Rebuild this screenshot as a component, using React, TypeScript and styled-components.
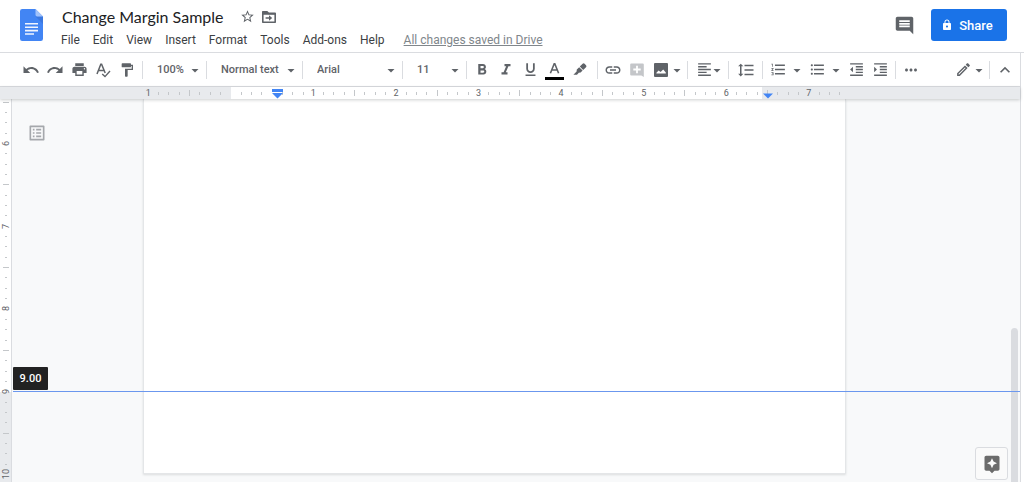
import React from "react";
import styled, { createGlobalStyle } from "styled-components";
import {
  MdAssistant,
  MdExpandLess,
  MdFormatAlignLeft,
  MdFormatBold,
  MdFormatIndentDecrease,
  MdFormatIndentIncrease,
  MdFormatItalic,
  MdFormatLineSpacing,
  MdFormatListBulleted,
  MdFormatListNumbered,
  MdFormatPaint,
  MdFormatUnderlined,
  MdInsertComment,
  MdInsertLink,
  MdLock,
  MdMoreHoriz,
  MdOutlineEdit,
  MdOutlineListAlt,
  MdPrint,
  MdRedo,
  MdStarBorder,
  MdUndo,
} from "react-icons/md";

const color = {
  line: "#dadce0",
  icon: "#5f6368",
  text: "#3c4043",
  canvas: "#f8f9fa",
  margin: "#e8eaed",
  tick: "#c4c7ca",
  blue: "#1a73e8",
  guide: "#6b97ee",
  marker: "#4285f4",
};

const GlobalStyle = createGlobalStyle`
  * { box-sizing: border-box; }
  body {
    margin: 0;
    background: #fff;
    color: ${color.text};
    font-family: Roboto, "Liberation Sans", sans-serif;
    overflow: hidden;
  }
  button, input, select { font: inherit; color: inherit; }
  svg { display: block; flex: none; }
`;

const Shell = styled.div`
  display: flex;
  flex-direction: column;
  height: 100vh;
`;

/* Header */

const Header = styled.header`
  display: flex;
  align-items: flex-start;
  padding: 9px 17px 0 20px;
  height: 53px;
  flex: none;
  border-bottom: 1px solid ${color.line};
`;

const Titles = styled.div`
  flex: 1;
  min-width: 0;
  margin-left: 17px;
`;

const TitleRow = styled.div`
  display: flex;
  align-items: center;
  height: 15px;
`;

const TitleInput = styled.input`
  width: 175px;
  height: 22px;
  padding: 0 0 0 1px;
  border: 0;
  outline: 0;
  background: transparent;
  color: #202124;
  font-family: Lato, "Liberation Sans", sans-serif;
  font-size: 16px;
`;

const PlainButton = styled.button`
  display: flex;
  align-items: center;
  justify-content: center;
  padding: 0;
  border: 0;
  background: transparent;
  color: ${color.icon};
  cursor: pointer;
`;

const TitleAction = styled(PlainButton)`
  width: 22px;
  height: 20px;
`;

const MenuBar = styled.nav`
  display: flex;
  align-items: center;
  gap: 13px;
  height: 16px;
  margin-top: 8px;
  white-space: nowrap;
`;

const MenuItem = styled.button`
  padding: 0;
  border: 0;
  background: transparent;
  font-size: 12px;
  line-height: 16px;
  cursor: pointer;
`;

const SaveStatus = styled.a`
  margin-left: 6px;
  color: #80868b;
  font-size: 12px;
  line-height: 16px;
  text-decoration: underline;
`;

const CommentsButton = styled(PlainButton)`
  width: 32px;
  height: 32px;
  margin-right: 11px;
`;

const ShareButton = styled.button`
  display: flex;
  align-items: center;
  justify-content: center;
  gap: 6px;
  width: 76px;
  height: 32px;
  padding: 0 4px 0 0;
  border: 0;
  border-radius: 3px;
  background: ${color.blue};
  color: #fff;
  font-size: 13px;
  font-weight: 500;
  cursor: pointer;
`;

/* Toolbar */

const Editor = styled.div`
  display: flex;
  flex-direction: column;
  flex: 1;
  min-height: 0;
  margin-right: 3px;
  border-right: 1px solid ${color.line};
`;

const Toolbar = styled.div`
  display: flex;
  align-items: center;
  flex: none;
  height: 34px;
  padding: 0 3px 0 19px;
  border-bottom: 1px solid ${color.line};
`;

const Tool = styled(PlainButton)<{ $width?: number; $gap?: number }>`
  flex: none;
  width: ${(p) => p.$width ?? 24}px;
  height: 24px;
  gap: ${(p) => p.$gap ?? 0}px;
`;

const Divider = styled.span`
  flex: none;
  width: 1px;
  height: 18px;
  margin: 0 3px;
  background: ${color.line};
`;

const Spacer = styled.span`
  flex: 1;
`;

const Picker = styled.label<{ $width: number }>`
  display: grid;
  grid-template-columns: 1fr 12px;
  align-items: center;
  flex: none;
  width: ${(p) => p.$width}px;
  color: ${color.icon};
`;

const PickerSelect = styled.select`
  grid-area: 1 / 1 / 2 / 3;
  width: 100%;
  height: 24px;
  padding: 0 0 0 11px;
  border: 0;
  outline: 0;
  background: transparent;
  appearance: none;
  font-size: 11px;
  font-weight: 500;
`;

const PickerArrow = styled.span`
  grid-area: 1 / 2;
  padding-top: 1px;
  pointer-events: none;
`;

/* Rulers */

const RulerBar = styled.div`
  position: relative;
  z-index: 1;
  flex: none;
  height: 12px;
  padding-left: 143px;
  background: ${color.margin};
  box-shadow: 0 1px 3px rgba(60, 64, 67, 0.25);
`;

const HorizontalRuler = styled.div`
  display: grid;
  grid-template-columns: repeat(68, minmax(0, 1fr));
  width: 702px;
  height: 12px;
`;

const VerticalRuler = styled.div`
  display: grid;
  grid-template-rows: repeat(38, minmax(0, 1fr));
  flex: none;
  width: 12px;
  height: 393px;
  margin-top: -2px;
  border-right: 1px solid ${color.line};
`;

type Fill = "page" | "margin" | "pageStart" | "pageEnd";

const fills: Record<Fill, string> = {
  page: "#fff",
  margin: color.margin,
  pageStart: `linear-gradient(to right, ${color.margin} 50%, #fff 50%)`,
  pageEnd: `linear-gradient(to bottom, #fff 50%, ${color.margin} 50%)`,
};

const Slot = styled.span<{ $fill: Fill }>`
  position: relative;
  display: flex;
  align-items: center;
  justify-content: center;
  background: ${(p) => fills[p.$fill]};
`;

const Tick = styled.i<{ $long: boolean; $vertical?: boolean }>`
  width: ${(p) => (p.$vertical ? (p.$long ? 6 : 2) : 1)}px;
  height: ${(p) => (p.$vertical ? 1 : p.$long ? 6 : 3)}px;
  background: ${color.tick};
`;

const RulerNumber = styled.span<{ $vertical?: boolean }>`
  color: ${color.icon};
  font-size: 9px;
  line-height: 10px;
  writing-mode: ${(p) => (p.$vertical ? "vertical-rl" : "horizontal-tb")};
  transform: ${(p) => (p.$vertical ? "rotate(180deg)" : "none")};
`;

const IndentMarker = styled.span<{ $side: "left" | "right" }>`
  position: absolute;
  z-index: 1;
  top: ${(p) => (p.$side === "left" ? 2 : 6)}px;
  left: ${(p) => (p.$side === "left" ? "100%" : "50%")};
  margin-left: -5px;
`;

/* Workspace */

const Workspace = styled.main`
  position: relative;
  display: flex;
  align-items: flex-start;
  flex: 1;
  min-height: 0;
  overflow: hidden;
  background: ${color.canvas};
`;

const OutlineRail = styled.div`
  flex: none;
  width: 131px;
  padding: 24px 0 0 15px;
`;

const OutlineButton = styled(PlainButton)`
  width: 20px;
  height: 20px;
  color: #a5a8ac;
`;

const Page = styled.article`
  flex: none;
  width: 703px;
  height: 375px;
  background: #fff;
  border: 1px solid #e4e6e8;
  border-top: 0;
  box-shadow: 0 1px 2px rgba(60, 64, 67, 0.15);
`;

const MarginGuide = styled.div`
  position: absolute;
  z-index: 2;
  top: 268px;
  left: 13px;
  right: 0;
`;

const MarginValue = styled.output`
  display: block;
  width: 35px;
  height: 23px;
  margin-bottom: 1px;
  border-radius: 1px;
  background: #222;
  color: #fff;
  font-size: 11px;
  font-weight: 500;
  line-height: 23px;
  text-align: center;
`;

const GuideLine = styled.div`
  height: 1px;
  background: ${color.guide};
`;

const ScrollThumb = styled.div`
  position: absolute;
  top: 229px;
  bottom: -6px;
  right: 2px;
  width: 7px;
  border-radius: 4px;
  background: #dadce0;
`;

const ExploreButton = styled(PlainButton)`
  position: absolute;
  right: 12px;
  bottom: 2px;
  width: 33px;
  height: 33px;
  border: 1px solid ${color.line};
  border-radius: 3px;
  background: #fafafa;
  color: #6b6b6b;
`;

const DocsLogo = () => (
  <svg width="24" height="32" viewBox="0 0 24 32" aria-hidden="true">
    <path d="M2.2 0H15.5L23 7.5V29.8A2.2 2.2 0 0 1 20.8 32H2.2A2.2 2.2 0 0 1 0 29.8V2.2A2.2 2.2 0 0 1 2.2 0Z" fill="#4285f4" />
    <path d="M15.5 7.5L23 15V7.5Z" fill="#3b78e0" />
    <path d="M15.5 0L23 7.5H17.2A1.7 1.7 0 0 1 15.5 5.8Z" fill="#a1c2fa" />
    <path d="M5 14H18V15.6H5ZM5 17.4H18V19H5ZM5 20.8H18V22.4H5ZM5 24.2H14V25.8H5Z" fill="#f1f5fe" />
  </svg>
);

const Caret = () => (
  <svg width="8" height="8" viewBox="0 0 8 8" aria-hidden="true">
    <path d="M0.5 3H7.5L4 6.5Z" fill="currentColor" />
  </svg>
);

const MoveIcon = () => (
  <svg width="16" height="16" viewBox="0 0 16 16" aria-hidden="true">
    <path
      d="M1.8 2.8H6L7.6 4.4H14.2V13.2H1.8Z"
      fill="none"
      stroke="currentColor"
      strokeWidth="1.6"
      strokeLinejoin="round"
    />
    <path d="M1.8 2.6H6L7.6 4.2H14.4V5.8H1.8Z" fill="currentColor" />
    <path d="M4.6 8.2H8V6.2L11.2 9L8 11.8V9.8H4.6Z" fill="currentColor" />
  </svg>
);

const SpellcheckIcon = () => (
  <svg width="18" height="18" viewBox="0 0 18 18" fill="none" stroke="currentColor" aria-hidden="true">
    <path d="M3 13L6.8 3.2H7.6L11.2 12M4.4 9.6H9.8" strokeWidth="1.5" />
    <path d="M8.2 13L11 15.6L16 10" strokeWidth="1.4" />
  </svg>
);

const HighlighterIcon = () => (
  <svg width="16" height="16" viewBox="0 0 16 16" fill="currentColor" aria-hidden="true">
    <path d="M10.6 1.8A1.4 1.4 0 0 1 12.6 1.8L14 3.2A1.4 1.4 0 0 1 14 5.2L11.2 8L7.8 4.6Z" />
    <path d="M7.2 5.2L10.6 8.6L8.6 10.6L6.8 10.8L5 12.8H1.4L4.6 9.4L4.8 7.6Z" />
  </svg>
);

const AddCommentIcon = () => (
  <svg width="16" height="16" viewBox="0 0 16 16" aria-hidden="true">
    <path d="M2.2 1.4H13.8A1 1 0 0 1 14.8 2.4V15L12.4 13.4H2.2A1 1 0 0 1 1.2 12.4V2.4A1 1 0 0 1 2.2 1.4Z" fill="#c4c6c9" />
    <path d="M7.1 3.8H8.9V6.6H11.7V8.4H8.9V11.2H7.1V8.4H4.3V6.6H7.1Z" fill="#fff" />
  </svg>
);

const ImageIcon = () => (
  <svg width="16" height="16" viewBox="0 0 16 16" aria-hidden="true">
    <path d="M2 1H14A1 1 0 0 1 15 2V14A1 1 0 0 1 14 15H2A1 1 0 0 1 1 14V2A1 1 0 0 1 2 1Z" fill="currentColor" />
    <path d="M3.4 11.6V10.8L5.6 8.4L7.6 10L10.2 7.4L12.8 10.6V11.6Z" fill="#fff" />
  </svg>
);

const TextColorIcon = () => (
  <svg width="20" height="20" viewBox="0 0 20 20" fill="none" aria-hidden="true">
    <path d="M6.4 13.2L10.2 3.8H10.8L14.6 13.2M7.6 10H13.4" stroke="currentColor" strokeWidth="1.6" />
    <path d="M1 17H20V20H1Z" fill="#000" />
  </svg>
);

const IndentShape = ({ side }: { side: "left" | "right" }) =>
  side === "left" ? (
    <svg width="11" height="10" viewBox="0 0 11 10" aria-hidden="true">
      <path d="M0 0H11V3H0ZM0 4H11L5.5 9.5Z" fill={color.marker} />
    </svg>
  ) : (
    <svg width="10" height="6" viewBox="0 0 10 6" aria-hidden="true">
      <path d="M0 0.5H10L5 5.5Z" fill={color.marker} />
    </svg>
  );

const menus = ["File", "Edit", "View", "Insert", "Format", "Tools", "Add-ons", "Help"];

const pickers = [
  { label: "Zoom", value: "100%", width: 57 },
  { label: "Styles", value: "Normal text", width: 89 },
  { label: "Font", value: "Arial", width: 93 },
  { label: "Font size", value: "11", width: 57 },
];

const horizontalSlots = Array.from({ length: 68 }, (_, i) => {
  const inch = i / 8 - 1;
  const fill: Fill = i === 8 ? "pageStart" : i > 8 && i < 60 ? "page" : "margin";
  return { i, inch, fill };
});

const verticalSlots = Array.from({ length: 38 }, (_, i) => {
  const inch = 5.5 + i / 8;
  const fill: Fill = inch === 9 ? "pageEnd" : inch < 9 ? "page" : "margin";
  return { i, inch, fill };
});

export default function App() {
  return (
    <Shell>
      <GlobalStyle />
      <Header>
        <DocsLogo />
        <Titles>
          <TitleRow>
            <TitleInput aria-label="Document title" defaultValue="Change Margin Sample" />
            <TitleAction aria-label="Star"><MdStarBorder size={15} /></TitleAction>
            <TitleAction aria-label="Move"><MoveIcon /></TitleAction>
          </TitleRow>
          <MenuBar>
            {menus.map((name) => (
              <MenuItem key={name}>{name}</MenuItem>
            ))}
            <SaveStatus href="#history">All changes saved in Drive</SaveStatus>
          </MenuBar>
        </Titles>
        <CommentsButton aria-label="Comments"><MdInsertComment size={21} /></CommentsButton>
        <ShareButton><MdLock size={12} />Share</ShareButton>
      </Header>

      <Editor>
        <Toolbar role="toolbar">
          <Tool aria-label="Undo"><MdUndo size={18} /></Tool>
          <Tool aria-label="Redo"><MdRedo size={18} /></Tool>
          <Tool aria-label="Print"><MdPrint size={17} /></Tool>
          <Tool aria-label="Spelling"><SpellcheckIcon /></Tool>
          <Tool aria-label="Paint format"><MdFormatPaint size={16} /></Tool>
          <Divider />
          {pickers.map((p) => (
            <React.Fragment key={p.label}>
              <Picker $width={p.width}>
                <PickerSelect aria-label={p.label} defaultValue={p.value}>
                  <option>{p.value}</option>
                </PickerSelect>
                <PickerArrow><Caret /></PickerArrow>
              </Picker>
              <Divider />
            </React.Fragment>
          ))}
          <Tool aria-label="Bold"><MdFormatBold size={18} /></Tool>
          <Tool aria-label="Italic"><MdFormatItalic size={18} /></Tool>
          <Tool aria-label="Underline"><MdFormatUnderlined size={17} /></Tool>
          <Tool aria-label="Text color"><TextColorIcon /></Tool>
          <Tool aria-label="Highlight color" $width={28}><HighlighterIcon /></Tool>
          <Divider />
          <Tool aria-label="Insert link"><MdInsertLink size={18} /></Tool>
          <Tool aria-label="Add comment"><AddCommentIcon /></Tool>
          <Tool aria-label="Insert image" $width={35} $gap={4}><ImageIcon /><Caret /></Tool>
          <Divider />
          <Tool aria-label="Align" $width={34}><MdFormatAlignLeft size={17} /><Caret /></Tool>
          <Divider />
          <Tool aria-label="Line spacing" $width={27}><MdFormatLineSpacing size={18} /></Tool>
          <Divider />
          <Tool aria-label="Numbered list" $width={39} $gap={6}><MdFormatListNumbered size={17} /><Caret /></Tool>
          <Tool aria-label="Bulleted list" $width={39} $gap={6}><MdFormatListBulleted size={17} /><Caret /></Tool>
          <Tool aria-label="Decrease indent"><MdFormatIndentDecrease size={17} /></Tool>
          <Tool aria-label="Increase indent"><MdFormatIndentIncrease size={17} /></Tool>
          <Divider />
          <Tool aria-label="More"><MdMoreHoriz size={18} /></Tool>
          <Spacer />
          <Tool aria-label="Editing mode" $width={34} $gap={3}><MdOutlineEdit size={17} /><Caret /></Tool>
          <Divider />
          <Tool aria-label="Hide the menus"><MdExpandLess size={20} /></Tool>
        </Toolbar>

        <RulerBar>
          <HorizontalRuler>
            {horizontalSlots.map(({ i, inch, fill }) => (
              <Slot key={i} $fill={fill}>
                {inch === 0 || i === 12 ? null : Number.isInteger(inch) ? (
                  <RulerNumber>{Math.abs(inch)}</RulerNumber>
                ) : (
                  <Tick $long={i % 4 === 0} />
                )}
                {i === 12 && <IndentMarker $side="left"><IndentShape side="left" /></IndentMarker>}
                {i === 60 && <IndentMarker $side="right"><IndentShape side="right" /></IndentMarker>}
              </Slot>
            ))}
          </HorizontalRuler>
        </RulerBar>

        <Workspace>
          <VerticalRuler>
            {verticalSlots.map(({ i, inch, fill }) => (
              <Slot key={i} $fill={fill}>
                {Number.isInteger(inch) ? (
                  <RulerNumber $vertical>{inch}</RulerNumber>
                ) : (
                  <Tick $vertical $long={i % 4 === 0} />
                )}
              </Slot>
            ))}
          </VerticalRuler>
          <OutlineRail>
            <OutlineButton aria-label="Show document outline"><MdOutlineListAlt size={20} /></OutlineButton>
          </OutlineRail>
          <Page />
          <ScrollThumb />
          <MarginGuide>
            <MarginValue>9.00</MarginValue>
            <GuideLine />
          </MarginGuide>
          <ExploreButton aria-label="Explore"><MdAssistant size={20} /></ExploreButton>
        </Workspace>
      </Editor>
    </Shell>
  );
}
